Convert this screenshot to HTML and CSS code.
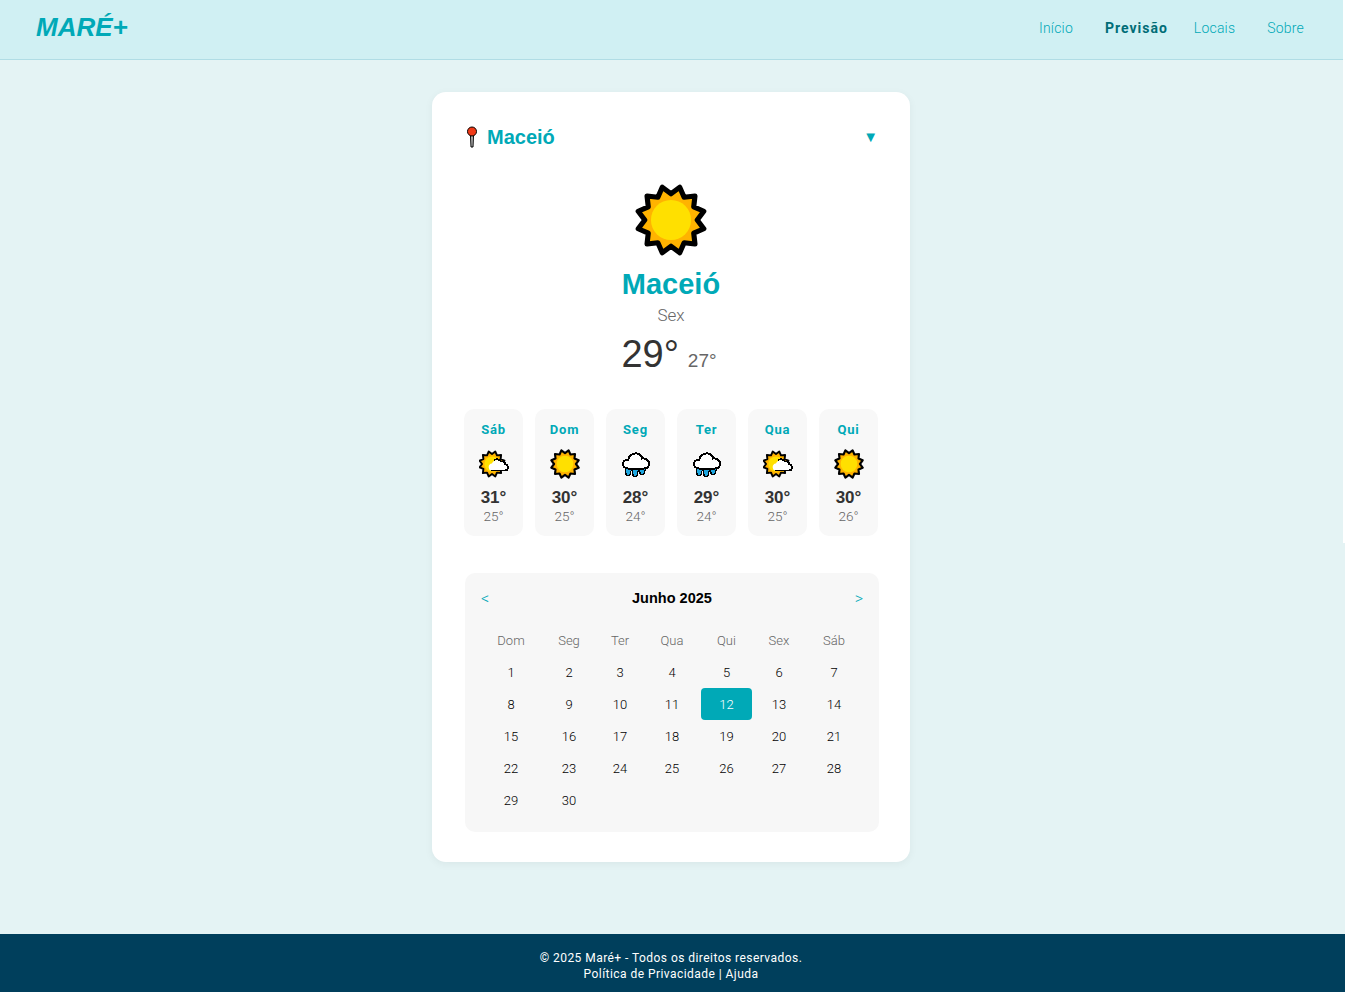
FILE: index.html
```html
<!DOCTYPE html>
<html lang="pt-BR">
<head>
    <meta charset="UTF-8">
    <meta name="viewport" content="width=device-width, initial-scale=1.0">
    <title>Maré+ - Previsão</title>
    <link rel="stylesheet" href="styles.css">
</head>
<body>
    <svg class="defs" width="0" height="0">
        <defs>
            <g id="sun">
                <polygon class="sun-rays" points="0,-25.500 8.500,-31.900 12.750,-22.100 23.300,-23.300 22.100,-12.750 31.900,-8.500 25.500,0 31.900,8.500 22.100,12.750 23.300,23.300 12.750,22.100 8.500,31.900 0,25.500 -8.500,31.900 -12.750,22.100 -23.300,23.300 -22.100,12.750 -31.900,8.500 -25.500,0 -31.900,-8.500 -22.100,-12.750 -23.300,-23.300 -12.750,-22.100 -8.500,-31.900"/>
                <circle class="sun-core" r="19.500"/>
            </g>
            <symbol id="icon-sun" viewBox="-35 -35 70 70">
                <use href="#sun"/>
            </symbol>
            <symbol id="icon-partly" viewBox="0 0 30 27">
                <use href="#sun" transform="translate(13 13.500) scale(.39)"/>
                <path class="cloud-fill" d="M10 18c-1-3 1-5 3-5 1-3 6-5 9-2 3-.5 4 1 4 2.500 2 .5 3 2 3 3.500s-1 3-3 3H13c-2 0-3-1-3-2z"/>
                <path class="cloud-line" d="M15 9.500c3-1.500 6-.5 7 1.500 3-.5 4 1 4 2.500 2 .5 3 2 3 3.500s-1 3-3 3H12"/>
            </symbol>
            <symbol id="icon-rain" viewBox="0 0 28 25">
                <path class="drop" d="M3 16h7l-2 7c-1 1.500-4.500 1-4-1zM10 16h7l-2 8c-1 1.500-4.500 1-4-1zM17 16h7l-2 6c-1 1.500-4.500 1-4-1z"/>
                <path class="cloud" d="M6 17c-3 0-5-2-5-4.500S3 8 6 8.500C7 4 11 1.500 15 2c3 .5 5 3 5 5 4-.5 7 2 7 5s-2 5-5 5z"/>
            </symbol>
        </defs>
    </svg>

    <div class="page">
        <header class="topbar">
            <div class="logo">MARÉ+</div>
            <nav class="nav">
                <a class="nav-link nav-inicio" href="#">Início</a>
                <a class="nav-link nav-previsao active" href="#">Previsão</a>
                <a class="nav-link nav-locais" href="#">Locais</a>
                <a class="nav-link" href="#">Sobre</a>
            </nav>
        </header>

        <main class="content">
            <section class="card">
                <div class="place-row">
                    <div class="place">
                        <svg class="pin" viewBox="0 0 12 22" width="12" height="22">
                            <path class="pin-stem" d="M4.500 9h3l-.5 12H5z"/>
                            <circle class="pin-head" cx="6" cy="5.500" r="4.500"/>
                        </svg>
                        <span class="place-name">Maceió</span>
                    </div>
                    <span class="place-arrow">▼</span>
                </div>

                <div class="today">
                    <svg class="today-icon" width="72" height="72"><use href="#icon-sun"/></svg>
                    <h1 class="city">Maceió</h1>
                    <div class="weekday">Sex</div>
                    <div class="temps"><span class="temp-max">29°</span><span class="temp-min">27°</span></div>
                </div>

                <div class="forecast">
                    <div class="day">
                        <div class="day-name">Sáb</div>
                        <svg class="day-icon" width="30" height="27"><use href="#icon-partly"/></svg>
                        <div class="day-max">31°</div>
                        <div class="day-min">25°</div>
                    </div>
                    <div class="day">
                        <div class="day-name">Dom</div>
                        <svg class="day-icon" width="30" height="30"><use href="#icon-sun"/></svg>
                        <div class="day-max">30°</div>
                        <div class="day-min">25°</div>
                    </div>
                    <div class="day">
                        <div class="day-name">Seg</div>
                        <svg class="day-icon" width="28" height="25"><use href="#icon-rain"/></svg>
                        <div class="day-max">28°</div>
                        <div class="day-min">24°</div>
                    </div>
                    <div class="day">
                        <div class="day-name">Ter</div>
                        <svg class="day-icon" width="28" height="25"><use href="#icon-rain"/></svg>
                        <div class="day-max">29°</div>
                        <div class="day-min">24°</div>
                    </div>
                    <div class="day">
                        <div class="day-name">Qua</div>
                        <svg class="day-icon" width="30" height="27"><use href="#icon-partly"/></svg>
                        <div class="day-max">30°</div>
                        <div class="day-min">25°</div>
                    </div>
                    <div class="day">
                        <div class="day-name">Qui</div>
                        <svg class="day-icon" width="30" height="30"><use href="#icon-sun"/></svg>
                        <div class="day-max">30°</div>
                        <div class="day-min">26°</div>
                    </div>
                </div>

                <div class="calendar">
                    <div class="cal-head">
                        <span class="cal-nav">&lt;</span>
                        <span class="cal-title">Junho 2025</span>
                        <span class="cal-nav">&gt;</span>
                    </div>
                    <div class="cal-grid">
                        <div class="cal-wd">Dom</div><div class="cal-wd">Seg</div><div class="cal-wd">Ter</div><div class="cal-wd">Qua</div><div class="cal-wd">Qui</div><div class="cal-wd">Sex</div><div class="cal-wd">Sáb</div>
                        <div class="cal-d">1</div><div class="cal-d">2</div><div class="cal-d">3</div><div class="cal-d">4</div><div class="cal-d">5</div><div class="cal-d">6</div><div class="cal-d">7</div>
                        <div class="cal-d">8</div><div class="cal-d">9</div><div class="cal-d">10</div><div class="cal-d">11</div><div class="cal-d selected">12</div><div class="cal-d">13</div><div class="cal-d">14</div>
                        <div class="cal-d">15</div><div class="cal-d">16</div><div class="cal-d">17</div><div class="cal-d">18</div><div class="cal-d">19</div><div class="cal-d">20</div><div class="cal-d">21</div>
                        <div class="cal-d">22</div><div class="cal-d">23</div><div class="cal-d">24</div><div class="cal-d">25</div><div class="cal-d">26</div><div class="cal-d">27</div><div class="cal-d">28</div>
                        <div class="cal-d">29</div><div class="cal-d">30</div>
                    </div>
                </div>
            </section>
        </main>

        <footer class="footer">
            <div>© 2025 Maré+ - Todos os direitos reservados.</div>
            <div>Política de Privacidade | Ajuda</div>
        </footer>
    </div>
</body>
</html>
```

FILE: styles.css
```css
* {
    box-sizing: border-box;
}
html, body {
    margin: 0;
    background: #fff;
}
body {
    font-family: "Roboto", "Liberation Sans", sans-serif;
    color: #333;
}
.defs {
    display: block;
    height: 0;
}
.page {
    width: 1345px;
    height: 992px;
    display: flex;
    flex-direction: column;
}

/* topo */
.topbar {
    width: 1343px;
    height: 60px;
    padding: 0 39px 4px 36px;
    background: #d0f0f3;
    border-bottom: 1px solid #b0dde5;
    display: flex;
    align-items: center;
    justify-content: space-between;
}
.logo {
    font-family: "Liberation Sans", sans-serif;
    font-size: 26px;
    font-weight: bold;
    font-style: italic;
    color: #00a9b7;
}
.nav {
    display: flex;
    align-items: center;
}
.nav-link {
    font-size: 14px;
    font-weight: 300;
    letter-spacing: .2px;
    color: #00a9b7;
    text-decoration: none;
}
.nav-inicio { margin-right: 32px; }
.nav-previsao { margin-right: 26px; }
.nav-locais { margin-right: 32px; }
.nav-link.active {
    font-weight: bold;
    letter-spacing: 1px;
    color: #006d77;
}

/* conteudo */
.content {
    flex: 1;
    position: relative;
    padding: 32px 3px 0 0;
    background: #e4f3f4;
    display: flex;
    justify-content: center;
    align-items: flex-start;
}
.content::after {
    content: "";
    position: absolute;
    top: 0;
    right: 0;
    width: 2px;
    height: 483px;
    background: #fff;
}
.card {
    width: 478px;
    height: 770px;
    padding: 32px;
    background: #fff;
    border-radius: 14px;
    box-shadow: 0 2px 8px rgba(0, 0, 0, .05);
}
.place-row {
    display: flex;
    align-items: center;
    justify-content: space-between;
    height: 26px;
    padding: 0 0 0 2px;
}
.place {
    display: flex;
    align-items: center;
    gap: 9px;
}
.place-name {
    font-family: "Liberation Sans", sans-serif;
    font-size: 20px;
    font-weight: bold;
    color: #00a9b7;
}
.place-arrow {
    font-size: 15px;
    color: #00a9b7;
}
.pin-head {
    fill: #f03a17;
    stroke: #000;
}
.pin-stem {
    fill: #bbb;
    stroke: #000;
}

.today {
    margin-top: 34px;
    display: flex;
    flex-direction: column;
    align-items: center;
}
.city {
    margin: 10px 0 0;
    font-family: "Liberation Sans", sans-serif;
    font-size: 29px;
    line-height: 36px;
    font-weight: bold;
    color: #00a9b7;
}
.weekday {
    margin-top: 3px;
    font-size: 17px;
    line-height: 20px;
    font-weight: 300;
    color: #666;
}
.temps {
    margin-top: 8px;
    height: 46px;
    padding-right: 4px;
    display: flex;
    align-items: baseline;
    gap: 9px;
}
.temp-max {
    font-family: "Liberation Sans", sans-serif;
    font-size: 38px;
    color: #333;
}
.temp-min {
    font-family: "Liberation Sans", sans-serif;
    font-size: 19px;
    color: #666;
}

/* previsao */
.forecast {
    margin-top: 30px;
    display: flex;
    gap: 12px;
}
.day {
    width: 59px;
    height: 127px;
    padding-top: 13px;
    background: #f8f8f8;
    border-radius: 10px;
    display: flex;
    flex-direction: column;
    align-items: center;
}
.day-name {
    font-size: 13px;
    line-height: 16px;
    font-weight: bold;
    letter-spacing: .8px;
    color: #00a9b7;
}
.day-icon {
    margin-top: 11px;
    height: 30px;
}
.day-max {
    margin-top: 9px;
    font-family: "Liberation Sans", sans-serif;
    font-size: 17px;
    line-height: 19px;
    font-weight: bold;
    color: #333;
}
.day-min {
    font-size: 13.500px;
    line-height: 18px;
    font-weight: 300;
    color: #666;
}

/* calendario */
.calendar {
    margin: 37px 0 0 1px;
    width: 414px;
    height: 259px;
    padding: 16px;
    background: #f7f7f7;
    border-radius: 10px;
}
.cal-head {
    height: 18px;
    display: flex;
    align-items: center;
    justify-content: space-between;
}
.cal-nav {
    font-size: 16px;
    font-weight: 300;
    color: #00a9b7;
}
.cal-title {
    font-family: "Liberation Sans", sans-serif;
    font-size: 14.500px;
    font-weight: bold;
    color: #000;
}
.cal-grid {
    margin-top: 17px;
    display: grid;
    grid-template-columns: 60px 56px 46px 58px 51px 54px 56px;
    grid-auto-rows: 32px;
    align-items: stretch;
}
.cal-wd,
.cal-d {
    display: flex;
    align-items: center;
    justify-content: center;
    font-size: 13px;
    font-weight: 300;
}
.cal-wd {
    color: #666;
}
.cal-d {
    color: #000;
}
.cal-d.selected {
    background: #00a9b7;
    color: #fff;
    border-radius: 4px;
}

/* rodape */
.footer {
    height: 58px;
    padding: 16px 3px 0 0;
    background: #003f5c;
    color: #fff;
    font-size: 12px;
    line-height: 16px;
    letter-spacing: .45px;
    text-align: center;
}

/* icones */
.sun-rays {
    fill: #ffb300;
    stroke: #000;
    stroke-width: 5;
    stroke-linejoin: round;
}
.sun-core {
    fill: #ffe000;
}
.cloud {
    fill: #fff;
    stroke: #000;
    stroke-width: 2;
    shape-rendering: crispEdges;
}
.cloud-fill {
    fill: #fff;
}
.cloud-line {
    fill: none;
    stroke: #000;
    stroke-width: 1.800;
    shape-rendering: crispEdges;
}
.drop {
    fill: #1ea7e0;
    stroke: #000;
    stroke-width: 1.200;
    shape-rendering: crispEdges;
}
```
